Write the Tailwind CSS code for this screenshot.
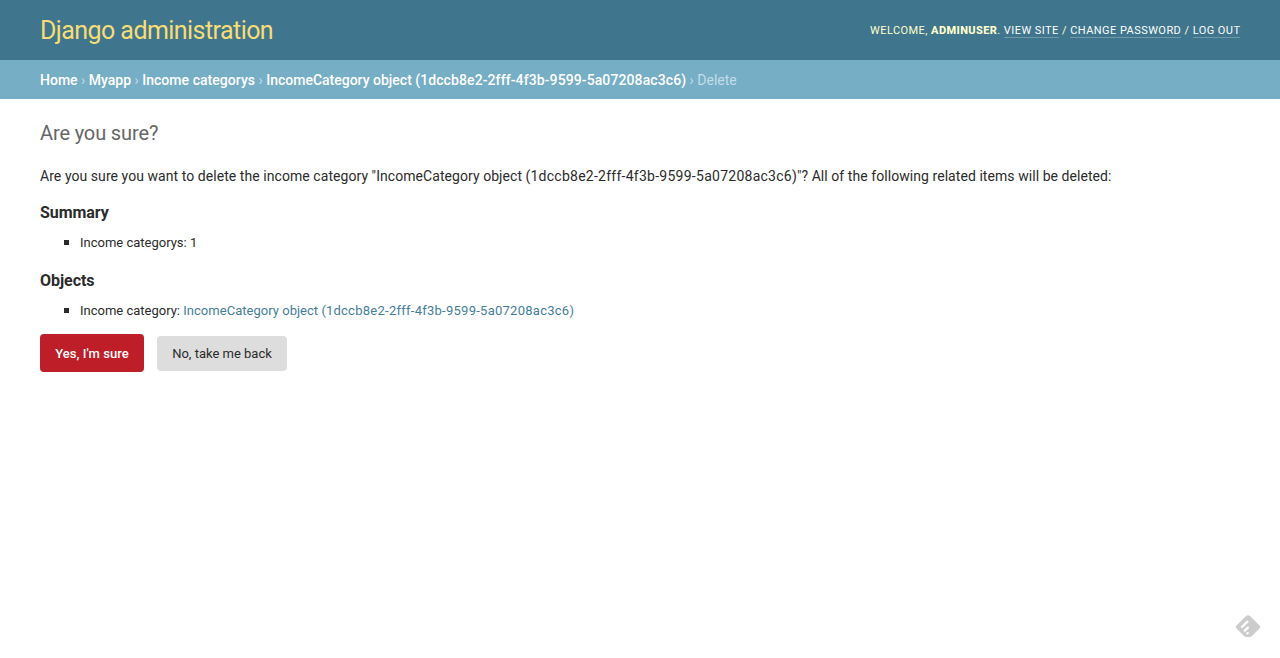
<!DOCTYPE html>
<html lang="en"><head><meta charset="utf-8"><title>Are you sure?</title>
<script src="https://cdn.jsdelivr.net/npm/@tailwindcss/browser@4"></script></head>
<body class="bg-white font-['Roboto',sans-serif] text-[#2b2b2b] text-[13px] min-h-[658px] overflow-hidden">
<header class="h-[60px] bg-[#3f768d] px-10 flex items-center justify-between">
<h1 class="text-[25px] leading-8 pt-px font-normal tracking-[-0.56px] text-[#f8dc74]">Django administration</h1>
<div class="text-[11px] leading-4 pt-px -mr-[0.45px] tracking-[0.45px] text-[#ffc] uppercase whitespace-nowrap">Welcome, <strong class="font-extrabold tracking-[0.4px]">adminuser</strong>. <a class="text-white border-b border-white/25">View site</a> / <a class="text-white border-b border-white/25">Change password</a> / <a class="text-white border-b border-white/25">Log out</a></div>
</header>
<nav class="h-[39px] bg-[#75aec5] px-10 pt-px flex items-center text-[14px] text-[#c4dce8] whitespace-pre"><div><a class="text-white font-medium">Home</a> › <a class="text-white font-medium">Myapp</a> › <a class="text-white font-medium tracking-[0.04px]">Income categorys</a> › <a class="text-white font-medium">IncomeCategory object (<span class="tracking-[0.1px]">1dccb8e2-2fff-4f3b-9599-5a07208ac3c6</span>)</a> › Delete</div></nav>
<main class="px-10 pt-5">
<h2 class="text-[20px] leading-7 font-normal tracking-[-0.13px] text-[#666]">Are you sure?</h2>
<p class="mt-[19px] text-[14px] leading-5 whitespace-nowrap tracking-[0.06px]">Are you sure you want to delete the income category "IncomeCategory object (<span class="tracking-[0.26px]">1dccb8e2-2fff-4f3b-9599-5a07208ac3c6</span>)"? All of the following related items will be deleted:</p>
<h3 class="mt-[17px] text-[16px] leading-5 font-bold tracking-[-0.05px]">Summary</h3>
<ul class="mt-[10px] pl-10 leading-5"><li class="flex items-center before:content-[''] before:size-[5px] before:mb-0.5 before:bg-[#2b2b2b] before:-ml-4 before:mr-[11px]">Income categorys: 1</li></ul>
<h3 class="mt-[18px] text-[16px] leading-5 font-bold tracking-[-0.05px]">Objects</h3>
<ul class="mt-[10px] pl-10 leading-5"><li class="flex items-center whitespace-pre before:content-[''] before:size-[5px] before:mb-0.5 before:bg-[#2b2b2b] before:-ml-4 before:mr-[11px]"><span>Income category: <a class="text-[#447e9b] tracking-[0.03px]">IncomeCategory object (<span class="tracking-[0.26px]">1dccb8e2-2fff-4f3b-9599-5a07208ac3c6</span>)</a></span></li></ul>
<div class="mt-[13px] flex items-center gap-[13px]"><button class="w-[104px] h-[38px] pt-px rounded bg-[#bd1e27] text-white font-medium tracking-[0.04px]">Yes, I'm sure</button><a class="w-[130px] h-[35px] pt-px rounded bg-[#ddd] flex items-center justify-center">No, take me back</a></div>
</main>
<svg class="fixed left-[1235px] top-[614px]" width="26" height="24" viewBox="0 0 26 24"><path fill="#ccc" d="M11 2q2-1.6 4 0l9 9q2 2 0 4l-7 7q-1 1-2 1h-4q-1 0-2-1l-7-7q-2-2 0-4z"/><path d="M7 13l5.3-5.3M9.8 16.7l3-3" stroke="#fff" stroke-width="2.4" stroke-linecap="round"/><path d="M12.5 19.3l.1-.1" stroke="#fff" stroke-width="2.4" stroke-linecap="round"/></svg>
</body></html>
